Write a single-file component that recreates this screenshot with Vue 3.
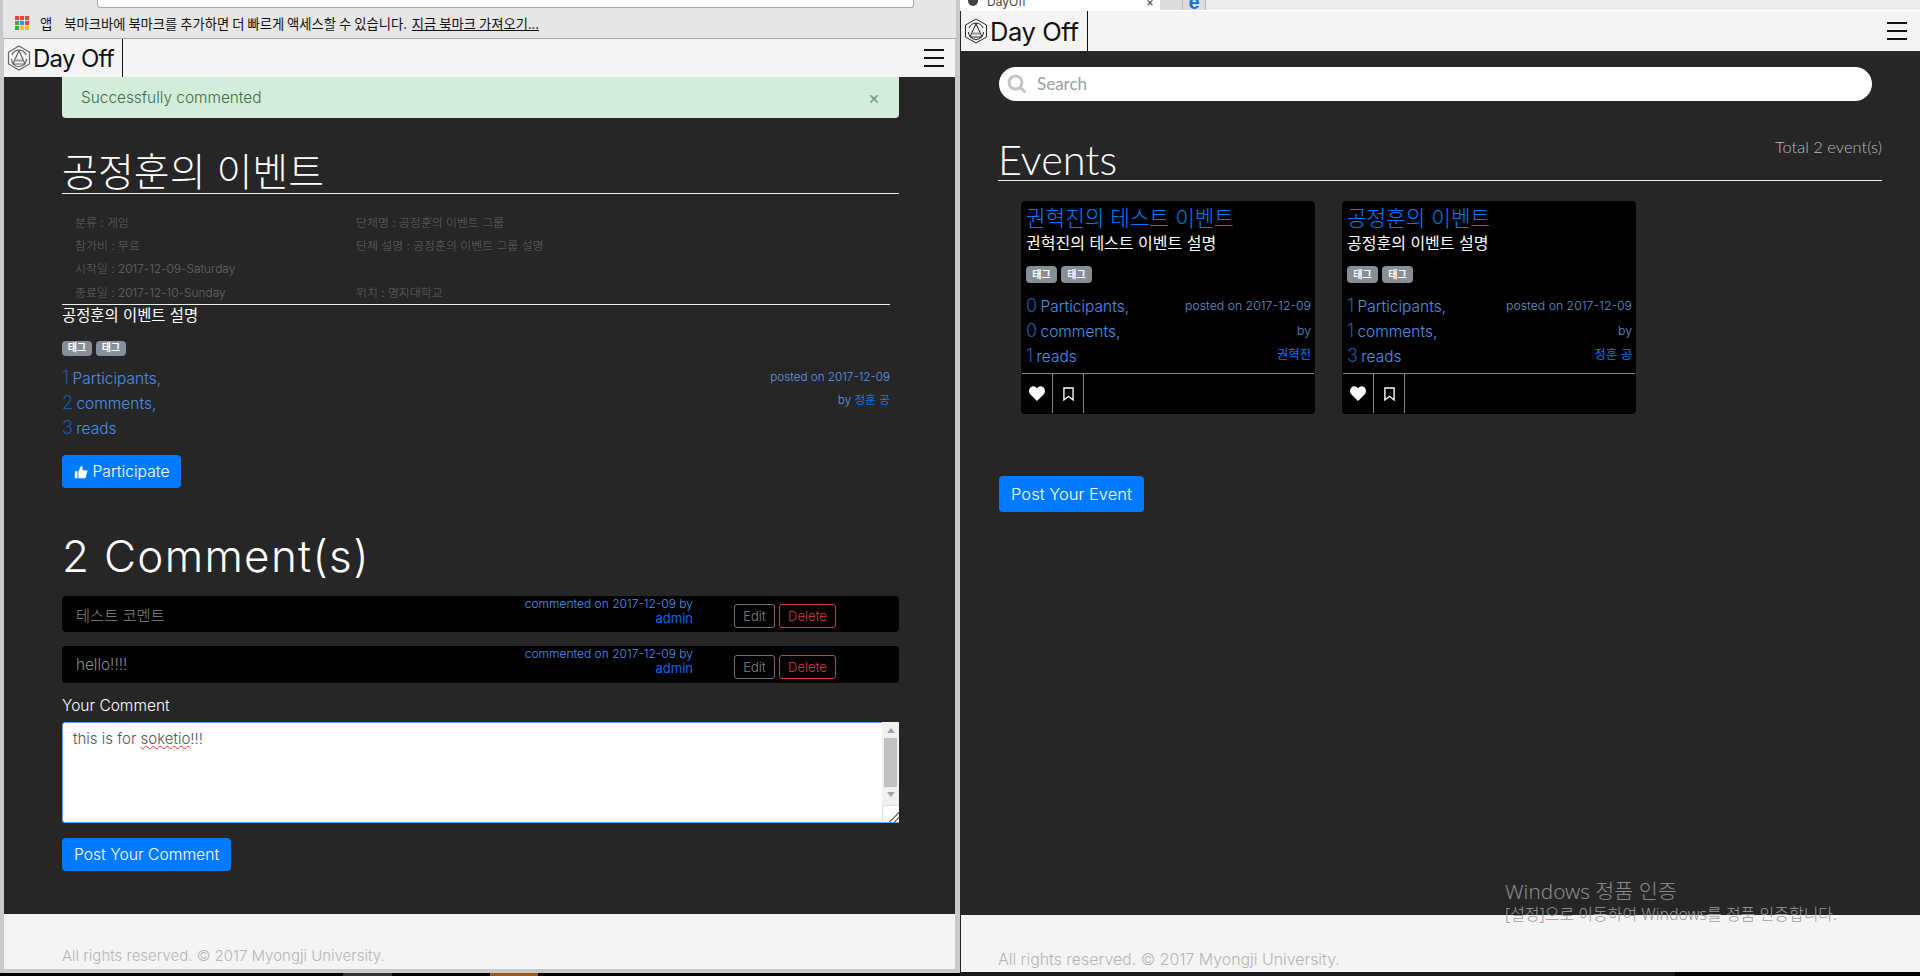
<script setup>
const info = [
  ["분류 : 게임", "단체명 : 공정훈의 이벤트 그룹"],
  ["참가비 : 무료", "단체 설명 : 공정훈의 이벤트 그룹 설명"],
  ["시작일 : 2017-12-09-Saturday", ""],
  ["종료일 : 2017-12-10-Sunday", "위치 : 명지대학교"],
];
const comments = [
  { text: "테스트 코멘트", tall: false },
  { text: "hello!!!!", tall: true },
];
const cards = [
  { title: "권혁진의 테스트 이벤트", desc: "권혁진의 테스트 이벤트 설명", p: 0, c: 0, r: 1, by: "권혁진" },
  { title: "공정훈의 이벤트", desc: "공정훈의 이벤트 설명", p: 1, c: 1, r: 3, by: "정훈 공" },
];
const dots = ["#ea4335", "#ea4335", "#ea4335", "#34a853", "#4285f4", "#ea4335", "#34a853", "#fbbc05", "#fbbc05"];
</script>

<template>
  <div class="screen">
    <section class="window left">
      <div class="chrome">
        <div class="address"></div>
        <div class="bookmarks">
          <span class="apps"><i v-for="(d, i) in dots" :key="i" :style="{ background: d }"></i></span>
          <span class="app-label">앱</span>
          <span>북마크바에 북마크를 추가하면 더 빠르게 액세스할 수 있습니다.</span>
          <a class="import">지금 북마크 가져오기...</a>
        </div>
      </div>
      <nav class="nav">
        <div class="brand">
          <svg class="logo" viewBox="0 0 24 26" fill="none" stroke="#666" stroke-width="1.200">
            <path d="M12 1 22.500 7v12L12 25 1.500 19V7z" />
            <path d="M5 10a7.500 7.500 0 0 1 14 0M19.500 14a7.500 7.500 0 0 1-15 0" />
            <path d="M12 5.500 6 19h12z" />
            <path d="M8 15.500h8" stroke-width="2" stroke="#999" />
          </svg>
          <span>Day Off</span>
        </div>
        <div class="burger"><i></i><i></i><i></i></div>
      </nav>
      <main class="detail">
        <div class="alert">
          <span>Successfully commented</span>
          <span class="close">×</span>
        </div>
        <h1 class="event-title">공정훈의 이벤트</h1>
        <div class="info">
          <div v-for="(row, i) in info" :key="i" class="info-row">
            <span>{{ row[0] }}</span>
            <span>{{ row[1] }}</span>
          </div>
        </div>
        <p class="desc">공정훈의 이벤트 설명</p>
        <div class="tags small"><span>태그</span><span>태그</span></div>
        <div class="stats-row">
          <div class="stats">
            <div><b>1</b> Participants,</div>
            <div><b>2</b> comments,</div>
            <div><b>3</b> reads</div>
          </div>
          <div class="posted">
            <div>posted on 2017-12-09</div>
            <div>by <a>정훈 공</a></div>
          </div>
        </div>
        <button class="btn participate">
          <svg viewBox="0 0 16 16" fill="#fff" width="14" height="14">
            <path d="M1 7h3v8H1zM5 7l3-6c1.500 0 2.300 1 2 2.500L9.500 6H14c1 0 1.500 1 1.200 1.800l-1.700 6.200c-.2.600-.7 1-1.300 1H5z" />
          </svg>
          Participate
        </button>
        <div class="faint"></div>
        <h2 class="comment-head">2 Comment(s)</h2>
        <div v-for="c in comments" :key="c.text" class="comment" :class="{ tall: c.tall }">
          <span class="comment-text">{{ c.text }}</span>
          <div class="comment-meta">commented on 2017-12-09 by<br /><a>admin</a></div>
          <span class="outline edit">Edit</span>
          <span class="outline del">Delete</span>
        </div>
        <label class="your">Your Comment</label>
        <div class="textarea">
          <div class="typed">this is for <span class="typo">soketio</span>!!!</div>
          <div class="scroll">
            <div class="track">
              <i class="up"></i>
              <i class="thumb"></i>
              <i class="down"></i>
            </div>
            <div class="resizer"></div>
          </div>
        </div>
        <button class="btn post">Post Your Comment</button>
      </main>
      <footer class="foot">All rights reserved. © 2017 Myongji University.</footer>
      <div class="frame-bottom"></div>
      <div class="taskbar"><i class="t1"></i><i class="t2"></i></div>
    </section>

    <section class="window right">
      <div class="tabstrip">
        <div class="tab"><i class="favicon"></i><span>DayOff</span><em>×</em></div>
        <div class="mini"></div>
        <div class="mini edge">e</div>
      </div>
      <nav class="nav r">
        <div class="brand">
          <svg class="logo" viewBox="0 0 24 26" fill="none" stroke="#222" stroke-width="1">
            <path d="M12 1 22.500 7v12L12 25 1.500 19V7z" />
            <path d="M5 10a7.500 7.500 0 0 1 14 0M19.500 14a7.500 7.500 0 0 1-15 0" />
            <path d="M12 5.500 6 19h12z" />
            <path d="M8 15.500h8" stroke-width="2" stroke="#999" />
          </svg>
          <span>Day Off</span>
        </div>
        <div class="burger"><i></i><i></i><i></i></div>
      </nav>
      <main class="events">
        <div class="search">
          <svg viewBox="0 0 20 20" fill="none" stroke="#c4c4c4" stroke-width="3" width="20" height="20">
            <circle cx="8.500" cy="8.500" r="6.500" />
            <path d="m13.500 13.500 5 5" />
          </svg>
          <span>Search</span>
        </div>
        <div class="events-head">
          <h1>Events</h1>
          <span>Total 2 event(s)</span>
        </div>
        <div class="cards">
          <article v-for="card in cards" :key="card.title" class="card">
            <div class="card-body">
              <div class="card-title">{{ card.title }}</div>
              <div class="card-desc">{{ card.desc }}</div>
              <div class="tags"><span>태그</span><span>태그</span></div>
              <div class="card-stats">
                <div class="stats">
                  <div><b>{{ card.p }}</b> Participants,</div>
                  <div><b>{{ card.c }}</b> comments,</div>
                  <div><b>{{ card.r }}</b> reads</div>
                </div>
                <div class="card-posted">
                  <div>posted on 2017-12-09</div>
                  <div>by</div>
                  <a>{{ card.by }}</a>
                </div>
              </div>
            </div>
            <div class="card-foot">
              <span class="act">
                <svg viewBox="0 0 16 15" fill="#fff" width="16" height="15">
                  <path d="M8 15 1.500 8.500C-.5 6.500-.3 3 1.500 1.500 3.500-.3 6.500 0 8 2.500 9.500 0 12.500-.3 14.500 1.500c1.800 1.500 2 5 0 7z" />
                </svg>
              </span>
              <span class="act">
                <svg viewBox="0 0 12 15" fill="none" stroke="#fff" stroke-width="1.500" width="11" height="14">
                  <path d="M1 1h10v13L6 10l-5 4z" />
                </svg>
              </span>
            </div>
          </article>
        </div>
        <div class="faint wide"></div>
        <button class="btn event-btn">Post Your Event</button>
      </main>
      <footer class="foot r">All rights reserved. © 2017 Myongji University.</footer>
      <div class="taskbar r"></div>
      <div class="watermark">
        <div>Windows 정품 인증</div>
        <small>[설정]으로 이동하여 Windows를 정품 인증합니다.</small>
      </div>
    </section>
  </div>
</template>

<style scoped>
.screen {
  display: flex;
  width: 1920px;
  height: 976px;
  overflow: hidden;
  background: #000;
  font-family: Inter, "Noto Sans CJK KR", sans-serif;
  font-weight: 300;
  color: #fff;
}
.window {
  position: relative;
  display: flex;
  flex-direction: column;
  width: 960px;
  height: 976px;
}
.window > * {
  flex-shrink: 0;
}
.window.left {
  background: #c9c9c9;
  padding: 0 5px 0 4px;
  box-sizing: border-box;
}
a {
  color: #007bff;
  font-weight: 400;
}

/* browser chrome */
.chrome {
  height: 38px;
  margin: 0 -1px;
  background: #e6e6e6;
  border-bottom: 1px solid #aaa;
  color: #111;
  font: 400 13.300px "Noto Sans CJK KR", sans-serif;
}
.address {
  height: 7px;
  margin: 0 42px 0 94px;
  background: #fff;
  border: 1px solid #aaa;
  border-top: 0;
  border-radius: 0 0 3px 3px;
}
.bookmarks {
  display: flex;
  align-items: center;
  height: 30px;
  padding-left: 12px;
  white-space: nowrap;
}
.apps {
  display: grid;
  grid-template-columns: repeat(3, 4px);
  gap: 1px;
  margin-right: 11px;
}
.apps i {
  width: 4px;
  height: 4px;
}
.app-label {
  margin-right: 12px;
}
.import {
  margin-left: 5px;
  color: #111;
  text-decoration: underline;
}

/* top bar */
.nav {
  display: flex;
  justify-content: space-between;
  align-items: center;
  height: 38px;
  background: #f4f4f4;
  color: #111;
}
.nav.r {
  height: 40px;
  margin-left: 1px;
}
.brand {
  display: flex;
  align-items: center;
  align-self: stretch;
  gap: 2px;
  padding: 0 8px 0 3px;
  border-right: 1px solid #111;
  font-size: 24px;
  font-weight: 400;
  letter-spacing: -0.7px;
}
.r .brand {
  padding-right: 9px;
  font-size: 25.500px;
  letter-spacing: -0.4px;
}
.logo {
  width: 24px;
  height: 26px;
}
.burger {
  display: flex;
  flex-direction: column;
  gap: 5.500px;
  margin-right: 11px;
}
.r .burger {
  margin-right: 13px;
}
.burger i {
  width: 20px;
  height: 2.500px;
  background: #111;
}

/* left page */
.detail {
  height: 837px;
  padding: 0 56px 0 58px;
  background: #262626;
}
.alert {
  display: flex;
  justify-content: space-between;
  align-items: center;
  height: 41px;
  padding: 0 19px;
  box-sizing: border-box;
  background: #d4edda;
  border-radius: 0 0 4px 4px;
  color: #3c6e48;
  font-size: 15.400px;
}
.close {
  color: #6f9a7b;
  font-size: 18px;
  font-weight: 400;
}
.event-title {
  height: 46px;
  margin: 30px 0 0;
  box-sizing: border-box;
  border-bottom: 1px solid #eee;
  font-size: 39px;
  font-weight: 300;
  line-height: 47px;
  white-space: nowrap;
}
.info {
  height: 111px;
  box-sizing: border-box;
  margin-right: 9px;
  padding: 16px 0 0 13px;
  border-bottom: 1px solid #eee;
  color: #666;
  font-size: 11.900px;
}
.info-row {
  display: grid;
  grid-template-columns: 281px 1fr;
  align-items: center;
  height: 23.200px;
}
.desc {
  margin: 0;
  height: 20px;
  font-size: 15.400px;
  line-height: 22px;
  font-weight: 400;
}
.tags {
  display: flex;
  gap: 4px;
}
.tags span {
  width: 31px;
  height: 17px;
  background: #868e96;
  border-radius: 4px;
  font-size: 10px;
  font-weight: 700;
  line-height: 16px;
  text-align: center;
}
.tags.small {
  margin-top: 16px;
}
.tags.small span {
  width: 30px;
  height: 15px;
  line-height: 13px;
}
.stats-row {
  display: flex;
  justify-content: space-between;
  margin: 10px 9px 0 0;
}
.stats {
  color: #4b90e6;
  font-size: 15.500px;
  line-height: 25px;
}
.stats b {
  margin-right: -1px;
  color: #1a5cab;
  font-size: 18px;
  font-weight: 300;
  line-height: 1;
}
.posted {
  color: #5a9aea;
  font-size: 11.700px;
  line-height: 23px;
  text-align: right;
}
.btn {
  display: block;
  border: 0;
  border-radius: 4px;
  background: #007bff;
  color: #fff;
  font: inherit;
  font-size: 15.700px;
  padding: 0;
}
.participate {
  display: flex;
  align-items: center;
  justify-content: center;
  gap: 5px;
  width: 119px;
  height: 33px;
  margin-top: 14px;
}
.faint {
  height: 1px;
  margin-top: 28px;
  background: #2b2b2b;
}
.comment-head {
  margin: 15px 0 16px;
  font-size: 44px;
  font-weight: 300;
  line-height: 48px;
  letter-spacing: 1.300px;
  white-space: nowrap;
}
.comment {
  display: flex;
  align-items: center;
  height: 36px;
  margin-bottom: 14px;
  padding: 0 63px 0 14px;
  background: #000;
  border-radius: 4px;
}
.comment.tall {
  height: 37px;
  margin-bottom: 13px;
}
.comment-text {
  flex: 1;
  color: #8a8a8a;
  font-size: 15.300px;
}
.comment-meta {
  align-self: flex-start;
  margin-right: 41px;
  color: #4d94ec;
  font-size: 12px;
  line-height: 14px;
  padding-top: 1px;
  text-align: right;
}
.comment-meta a {
  color: #1565f0;
  font-size: 13px;
}
.outline {
  display: block;
  height: 24px;
  margin-top: 4px;
  box-sizing: border-box;
  border: 1px solid;
  border-radius: 3px;
  font-size: 13px;
  line-height: 22px;
  text-align: center;
}
.edit {
  width: 41px;
  margin-right: 4px;
  border-color: #6c757d;
  color: #7e868d;
}
.del {
  width: 57px;
  border-color: #dc3545;
  color: #dc3545;
}
.your {
  display: block;
  font-size: 15.500px;
  font-weight: 300;
  line-height: 20px;
}
.textarea {
  display: flex;
  justify-content: space-between;
  height: 101px;
  margin-top: 6px;
  box-sizing: border-box;
  background: #fff;
  border: 1px solid #5aa0ef;
  border-radius: 3px;
  color: #555;
  font-size: 15px;
}
.typed {
  padding: 7px 10px;
  line-height: 17px;
}
.typo {
  text-decoration: underline wavy #e33 1px;
}
.scroll {
  display: flex;
  flex-direction: column;
  width: 17px;
  margin: -1px -1px -1px 0;
}
.track {
  flex: 1;
  display: flex;
  flex-direction: column;
  align-items: center;
  padding-top: 6px;
  background: #f0f0f0;
}
.thumb {
  width: 13px;
  height: 49px;
  margin: 5px 0;
  background: #c1c1c1;
}
.up,
.down {
  width: 0;
  height: 0;
  border-left: 4px solid transparent;
  border-right: 4px solid transparent;
}
.up {
  border-bottom: 5px solid #a3a3a3;
}
.down {
  border-top: 5px solid #a3a3a3;
}
.resizer {
  height: 18px;
  box-sizing: border-box;
  border: 1px solid #ddd;
  border-right: 0;
  border-bottom: 1px solid #5aa0ef;
  background: linear-gradient(135deg, #fff 68%, #777 68%, #777 73%, #fff 73%, #fff 84%, #777 84%, #777 89%, #fff 89%);
}
.post {
  width: 169px;
  height: 33px;
  margin-top: 15px;
}
.foot {
  height: 55px;
  padding: 34px 0 0 58px;
  box-sizing: border-box;
  background: #f4f4f4;
  color: #b4b4b4;
  font-size: 15px;
  line-height: 16px;
}
.frame-bottom {
  height: 4px;
  margin: 0 -5px 0 -4px;
  background: #c9c9c9;
}
.taskbar {
  display: flex;
  flex: 1;
  margin: 0 -5px 0 -4px;
  padding-left: 343px;
  background: #000;
}
.t1 {
  width: 49px;
  background: #333;
  margin-right: 98px;
}
.t2 {
  width: 48px;
  background: #a0581a;
}

/* right page */
.window.right {
  background: #262626;
}
.tabstrip {
  display: flex;
  height: 11px;
  background: #ebebeb;
  border-bottom: 1px solid #fff;
  box-sizing: border-box;
}
.tab {
  display: flex;
  align-items: flex-start;
  width: 200px;
  padding: 0 6px 0 8px;
  box-sizing: border-box;
  overflow: hidden;
  background: #fff;
  color: #444;
  font-size: 12px;
  font-weight: 400;
  line-height: 4px;
}
.favicon {
  width: 10px;
  height: 6px;
  margin-right: 9px;
  background: #444;
  border-radius: 0 0 5px 5px;
}
.tab em {
  margin-left: auto;
  font-style: normal;
}
.mini {
  width: 22px;
  overflow: hidden;
  background: #dcdcdc;
  border-right: 1px solid #bbb;
}
.mini.edge {
  color: #0f78d4;
  font: 700 20px/4px "Liberation Sans", sans-serif;
  text-align: center;
}
.events {
  height: 864px;
  padding: 16px 38px 0 39px;
  box-sizing: border-box;
}
.search {
  display: flex;
  align-items: center;
  gap: 10px;
  width: 873px;
  height: 34px;
  padding-left: 8px;
  box-sizing: border-box;
  background: #fff;
  border-radius: 17px;
  color: #9aa0a6;
  font-family: Lato, sans-serif;
  font-size: 17px;
  font-weight: 400;
}
.search span {
  padding-bottom: 2px;
}
.events-head {
  display: flex;
  justify-content: space-between;
  align-items: flex-start;
  height: 47px;
  margin-top: 33px;
  margin-left: -1px;
  box-sizing: border-box;
  border-bottom: 1px solid #eee;
  font-family: Lato, sans-serif;
}
.events-head h1 {
  margin: 1px 0 0;
  font-size: 41.500px;
  font-weight: 300;
  line-height: 48px;
}
.events-head span {
  margin-top: 4px;
  color: #bbb;
  font-size: 16.500px;
  line-height: 18px;
}
.cards {
  display: flex;
  gap: 27px;
  margin: 20px 0 0 22px;
}
.card {
  width: 294px;
  height: 213px;
  background: #000;
  border-radius: 4px;
}
.card-body {
  height: 173px;
  padding: 5px 3px 0 4px;
  box-sizing: border-box;
  border-bottom: 1px solid #888;
  margin: 0 1px;
}
.card-title {
  color: #007bff;
  font-size: 21.300px;
  font-weight: 300;
  line-height: 24px;
  white-space: nowrap;
}
.card-desc {
  margin: 3px 0 13px;
  font-size: 16px;
  font-weight: 400;
  line-height: 20px;
  white-space: nowrap;
}
.card-stats {
  display: flex;
  justify-content: space-between;
  margin-top: 11px;
}
.card-posted {
  color: #5f93cf;
  font-size: 12.300px;
  line-height: 24.500px;
  text-align: right;
}
.card-posted a {
  display: block;
}
.card-foot {
  display: flex;
  height: 39px;
  margin-left: 1px;
}
.act {
  display: flex;
  align-items: center;
  justify-content: center;
  width: 30px;
  border-right: 1px solid #888;
}
.faint.wide {
  margin: 46px -38px 0 -39px;
}
.event-btn {
  width: 145px;
  height: 36px;
  margin-top: 15px;
  font-size: 16.500px;
}
.foot.r {
  height: 57px;
  padding: 37px 0 0 37px;
  margin-left: 1px;
  font-size: 15.900px;
}
.taskbar.r {
  margin: 0;
  padding: 0;
  background: linear-gradient(90deg, #1a1a1a 715px, #000 715px);
}
.watermark {
  position: absolute;
  left: 545px;
  top: 878px;
  color: #8a8a8a;
  font-family: "Noto Sans", "Noto Sans CJK KR", sans-serif;
  font-size: 20.700px;
  line-height: 26px;
  pointer-events: none;
  white-space: nowrap;
}
.watermark small {
  display: block;
  color: #9c9c9c;
  font-size: 16px;
  line-height: 20px;
}
</style>
